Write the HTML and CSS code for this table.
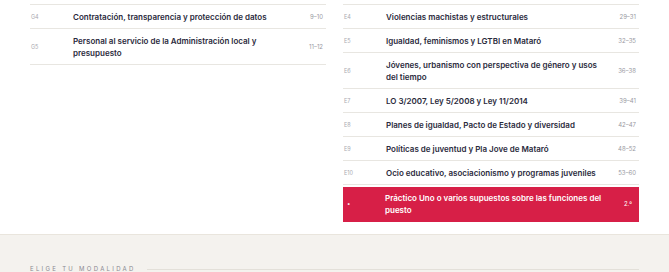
FILE: index.html
```html
<!DOCTYPE html>
<html lang="es">
<head>
<meta charset="utf-8">
<title>Temario</title>
<link rel="stylesheet" href="styles.css">
</head>
<body>
<section class="syllabus">
  <div class="cols">
    <div class="col">
      <div class="row"><span class="code">G4</span><span class="title">Contratación, transparencia y protección de datos</span><span class="pages">9–10</span></div>
      <div class="row"><span class="code">G5</span><span class="title">Personal al servicio de la Administración local y presupuesto</span><span class="pages">11–12</span></div>
    </div>
    <div class="col">
      <div class="row"><span class="code">E4</span><span class="title">Violencias machistas y estructurales</span><span class="pages">29–31</span></div>
      <div class="row"><span class="code">E5</span><span class="title">Igualdad, feminismos y LGTBI en Mataró</span><span class="pages">32–35</span></div>
      <div class="row"><span class="code">E6</span><span class="title">Jóvenes, urbanismo con perspectiva de género y usos del tiempo</span><span class="pages">36–38</span></div>
      <div class="row"><span class="code">E7</span><span class="title">LO 3/2007, Ley 5/2008 y Ley 11/2014</span><span class="pages">39–41</span></div>
      <div class="row"><span class="code">E8</span><span class="title">Planes de igualdad, Pacto de Estado y diversidad</span><span class="pages">42–47</span></div>
      <div class="row"><span class="code">E9</span><span class="title">Políticas de juventud y Pla Jove de Mataró</span><span class="pages">48–52</span></div>
      <div class="row"><span class="code">E10</span><span class="title">Ocio educativo, asociacionismo y programas juveniles</span><span class="pages">53–60</span></div>
      <div class="row row-accent"><span class="code">•</span><span class="title">Práctico Uno o varios supuestos sobre las funciones del puesto</span><span class="pages">2.º</span></div>
    </div>
  </div>
</section>
<section class="modes">
  <div class="eyebrow"><span>ELIGE TU MODALIDAD</span><span class="rule"></span></div>
</section>
</body>
</html>
```

FILE: styles.css
```css
* { box-sizing: border-box; }
html, body { margin: 0; padding: 0; background: #ffffff; }
body {
  width: 669px;
  height: 272px;
  overflow: hidden;
  font-family: Inter, "Noto Sans", sans-serif;
  color: #2a2a3c;
}
.syllabus {
  padding: 4px 30px 12px;
  border-bottom: 1px solid #e9e5dd;
}
.cols {
  display: grid;
  grid-template-columns: 296px 296px;
  column-gap: 17px;
  align-items: start;
}
.col {
  border-top: 1px solid #e8e6e1;
}
.row {
  display: grid;
  grid-template-columns: 42px 1fr auto;
  align-items: center;
  padding: 6px 3px 5px 1px;
  border-bottom: 1px solid #e8e6e1;
  min-height: 24px;
}
.code {
  font-size: 5.5px;
  color: #a9a9b0;
  line-height: 12px;
}
.title {
  font-size: 8px;
  font-weight: 600;
  line-height: 12px;
  color: #2a2a3c;
  padding-right: 12px;
}
.pages {
  font-size: 6px;
  color: #9a9aa2;
  line-height: 12px;
  text-align: right;
}
.row-accent {
  margin-top: 2px;
  background: #d71f47;
  border-bottom: none;
  padding: 5px 7px 6px 4px;
  grid-template-columns: 38px 1fr auto;
}
.row-accent .code,
.row-accent .title,
.row-accent .pages { color: #ffffff; }
.row-accent .code { font-size: 6px; }
.row-accent .title { padding-right: 14px; }
.modes {
  background: #f4f2ee;
  padding: 29px 30px 0;
  height: 40px;
}
.eyebrow {
  display: flex;
  align-items: center;
  gap: 11px;
  font-size: 6px;
  letter-spacing: 2.3px;
  color: #8a8a92;
  line-height: 10px;
}
.eyebrow .rule {
  flex: 1;
  height: 1px;
  background: #e3e0d9;
}
```
